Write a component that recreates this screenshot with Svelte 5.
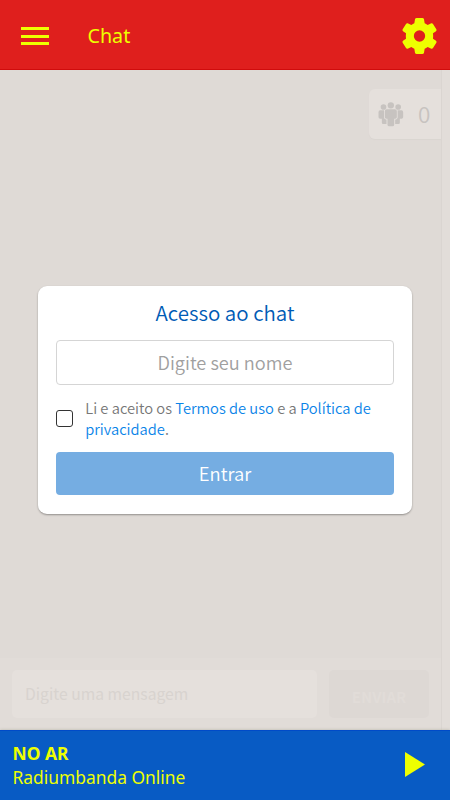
<script>
  let name = $state('');
  let accepted = $state(false);
  let message = $state('');
  let online = 0;
</script>

<div class="app">
  <header>
    <button class="icon-btn menu" aria-label="Menu">
      <span></span>
      <span></span>
      <span></span>
    </button>
    <h1>Chat</h1>
    <button class="icon-btn settings" aria-label="Configurações">
      <svg viewBox="18 24 105 108" width="35" height="36">
        <path fill-rule="evenodd" d="M62 24H79Q83 24 84 28L86 40Q90 42 95 45L106 40Q109 39 111 42L121 58Q123 61 120 64L111 70Q112 78 111 86L120 92Q123 95 121 98L111 114Q109 117 106 116L95 111Q90 114 86 116L84 128Q83 132 79 132H62Q58 132 57 128L55 116Q51 114 46 111L35 116Q32 117 30 114L20 98Q18 95 21 92L30 86Q29 78 30 70L21 64Q18 61 20 58L30 42Q32 39 35 40L46 45Q51 42 55 40L57 28Q58 24 62 24ZM70.500 61a17 17 0 1 0 0 34a17 17 0 1 0 0-34Z" />
      </svg>
    </button>
  </header>

  <main>
    <div class="room">
      <div class="users">
        <svg viewBox="11 20 77 75" width="26" height="25">
          <circle cx="49" cy="30" r="9.500" />
          <circle cx="27" cy="35" r="8.500" />
          <circle cx="71" cy="35" r="8.500" />
          <path d="M37 42H61Q67 42 67 48V66Q67 70 62 70H59V88Q59 93 54 93H44Q39 93 39 88V70H36Q31 70 31 66V48Q31 42 37 42Z" />
          <path d="M17 45H28.500V67Q29 72 36 73V86H26Q22 86 22 82V70H17Q12 70 12 65V51Q12 45 17 45Z" />
          <path d="M81 45H69.500V67Q69 72 62 73V86H72Q76 86 76 82V70H81Q86 70 86 65V51Q86 45 81 45Z" />
        </svg>
        <span>{online}</span>
      </div>

      <form class="access">
        <h2>Acesso ao chat</h2>
        <input class="name" type="text" placeholder="Digite seu nome" bind:value={name} />
        <label class="terms">
          <input type="checkbox" bind:checked={accepted} />
          <span>
            Li e aceito os <a href="#termos">Termos de uso</a> e a
            <a href="#privacidade">Política de privacidade</a>.
          </span>
        </label>
        <button class="enter" type="button">Entrar</button>
      </form>

      <div class="composer">
        <input type="text" placeholder="Digite uma mensagem" bind:value={message} />
        <button type="button">ENVIAR</button>
      </div>
    </div>
    <div class="scrollbar"></div>
  </main>

  <footer>
    <div class="track">
      <strong>NO AR</strong>
      <span>Radiumbanda Online</span>
    </div>
    <button class="icon-btn play" aria-label="Tocar">
      <svg viewBox="0 0 20 25" width="20" height="25">
        <path d="M0 0l20 12.500L0 25z" />
      </svg>
    </button>
  </footer>
</div>

<style>
  * {
    box-sizing: border-box;
  }

  :global(body) {
    margin: 0;
  }

  .app {
    display: flex;
    flex-direction: column;
    width: 450px;
    height: 800px;
    overflow: hidden;
    font-family: "Noto Sans", sans-serif;
    background: #dfdad6;
  }

  h1, h2 {
    margin: 0;
    font-weight: normal;
  }

  input, button {
    margin: 0;
    font-family: "Noto Sans CJK SC", sans-serif;
    outline: none;
  }

  .icon-btn {
    padding: 0;
    border: none;
    background: none;
  }

  .icon-btn svg {
    display: block;
    fill: #eeff00;
  }

  header {
    display: flex;
    align-items: center;
    height: 70px;
    padding: 0 13.500px 0 21px;
    background: #df1f1d;
    border-bottom: 1px solid #d00c0c;
    color: #eeff00;
  }

  .menu {
    display: flex;
    flex-direction: column;
    gap: 4.500px;
    width: 28px;
    padding-top: 3px;
  }

  .menu span {
    height: 3px;
    background: #eeff00;
  }

  h1 {
    margin-left: 38.500px;
    padding-top: 2px;
    font-size: 19.700px;
  }

  .settings {
    margin-left: auto;
    padding-top: 3px;
  }

  main {
    display: flex;
    flex: 1;
  }

  .room {
    display: flex;
    flex-direction: column;
    align-items: center;
    width: 441px;
    font-family: "Noto Sans CJK SC", sans-serif;
  }

  .scrollbar {
    flex: 1;
    background: #e2ddd9;
    border-left: 1px solid #dad5d1;
  }

  .users {
    display: flex;
    align-items: center;
    align-self: flex-end;
    gap: 14px;
    width: 72px;
    height: 50px;
    margin-top: 19px;
    padding: 0 0 2px 9px;
    border-radius: 6px 0 0 6px;
    background: #e5e0dc;
    box-shadow: 0 1px 1px #dad5d1;
    color: #c7c3c0;
    font-size: 22.500px;
    font-weight: 350;
  }

  .users svg {
    margin-top: 2px;
    fill: #c7c3c0;
  }

  .access {
    width: 374.500px;
    height: 228px;
    margin: 147px -9px 0 0;
    padding: 11px 18.500px 0;
    border-radius: 9px;
    background: #fff;
    box-shadow: 0 1px 2px rgba(0, 0, 0, 0.35);
  }

  h2 {
    height: 43px;
    line-height: 30px;
    font-size: 20.500px;
    font-weight: 350;
    text-align: center;
    color: #005bb5;
  }

  .name {
    display: block;
    width: 100%;
    height: 45px;
    padding: 0 12px 1px;
    border: 1px solid #d5d5d5;
    border-radius: 4px;
    font-size: 18.200px;
    font-weight: 350;
    text-align: center;
  }

  .name::placeholder {
    color: #a0a0a0;
  }

  .terms {
    display: flex;
    align-items: center;
    height: 67px;
    gap: 12px;
    line-height: 21px;
    font-size: 14.700px;
    font-weight: 350;
    color: #777;
  }

  .terms span {
    padding-bottom: 2px;
  }

  .terms input {
    flex: none;
    appearance: none;
    width: 17px;
    height: 17px;
    border: 1px solid #333;
    border-radius: 3px;
    background: #fff;
  }

  .terms a {
    color: #0a84e8;
    text-decoration: none;
  }

  .enter {
    display: block;
    width: 100%;
    height: 43px;
    padding: 0 0 1px;
    border: none;
    border-radius: 4px;
    background: #75ade2;
    color: #fff;
    font-size: 18.400px;
    font-weight: 350;
  }

  .composer {
    display: flex;
    gap: 12px;
    width: 100%;
    height: 72px;
    margin-top: auto;
    padding: 12px 12px 12px;
    background: #e1dcd8;
  }

  .composer input {
    flex: 1;
    min-width: 0;
    padding: 0 13px 1px;
    border: none;
    border-radius: 5px;
    background: #e5e0dc;
    font-size: 15.700px;
  }

  .composer input::placeholder {
    color: #d8d3cf;
  }

  .composer button {
    width: 100px;
    padding: 4px 0 0;
    border: none;
    border-radius: 5px;
    background: #ddd8d4;
    color: #e1dcd8;
    font-size: 15px;
    font-weight: bold;
  }

  footer {
    display: flex;
    align-items: center;
    justify-content: space-between;
    height: 70px;
    padding: 0 25px 0 12.500px;
    border-top: 1px solid #004bc8;
    box-shadow: 0 0 3px #b8b5a8;
    background: #085bc4;
    color: #eeff00;
  }

  .track {
    display: flex;
    flex-direction: column;
    padding-bottom: 2px;
    line-height: 24px;
    font-size: 17.400px;
  }

  .play {
    padding-bottom: 2px;
  }
</style>
